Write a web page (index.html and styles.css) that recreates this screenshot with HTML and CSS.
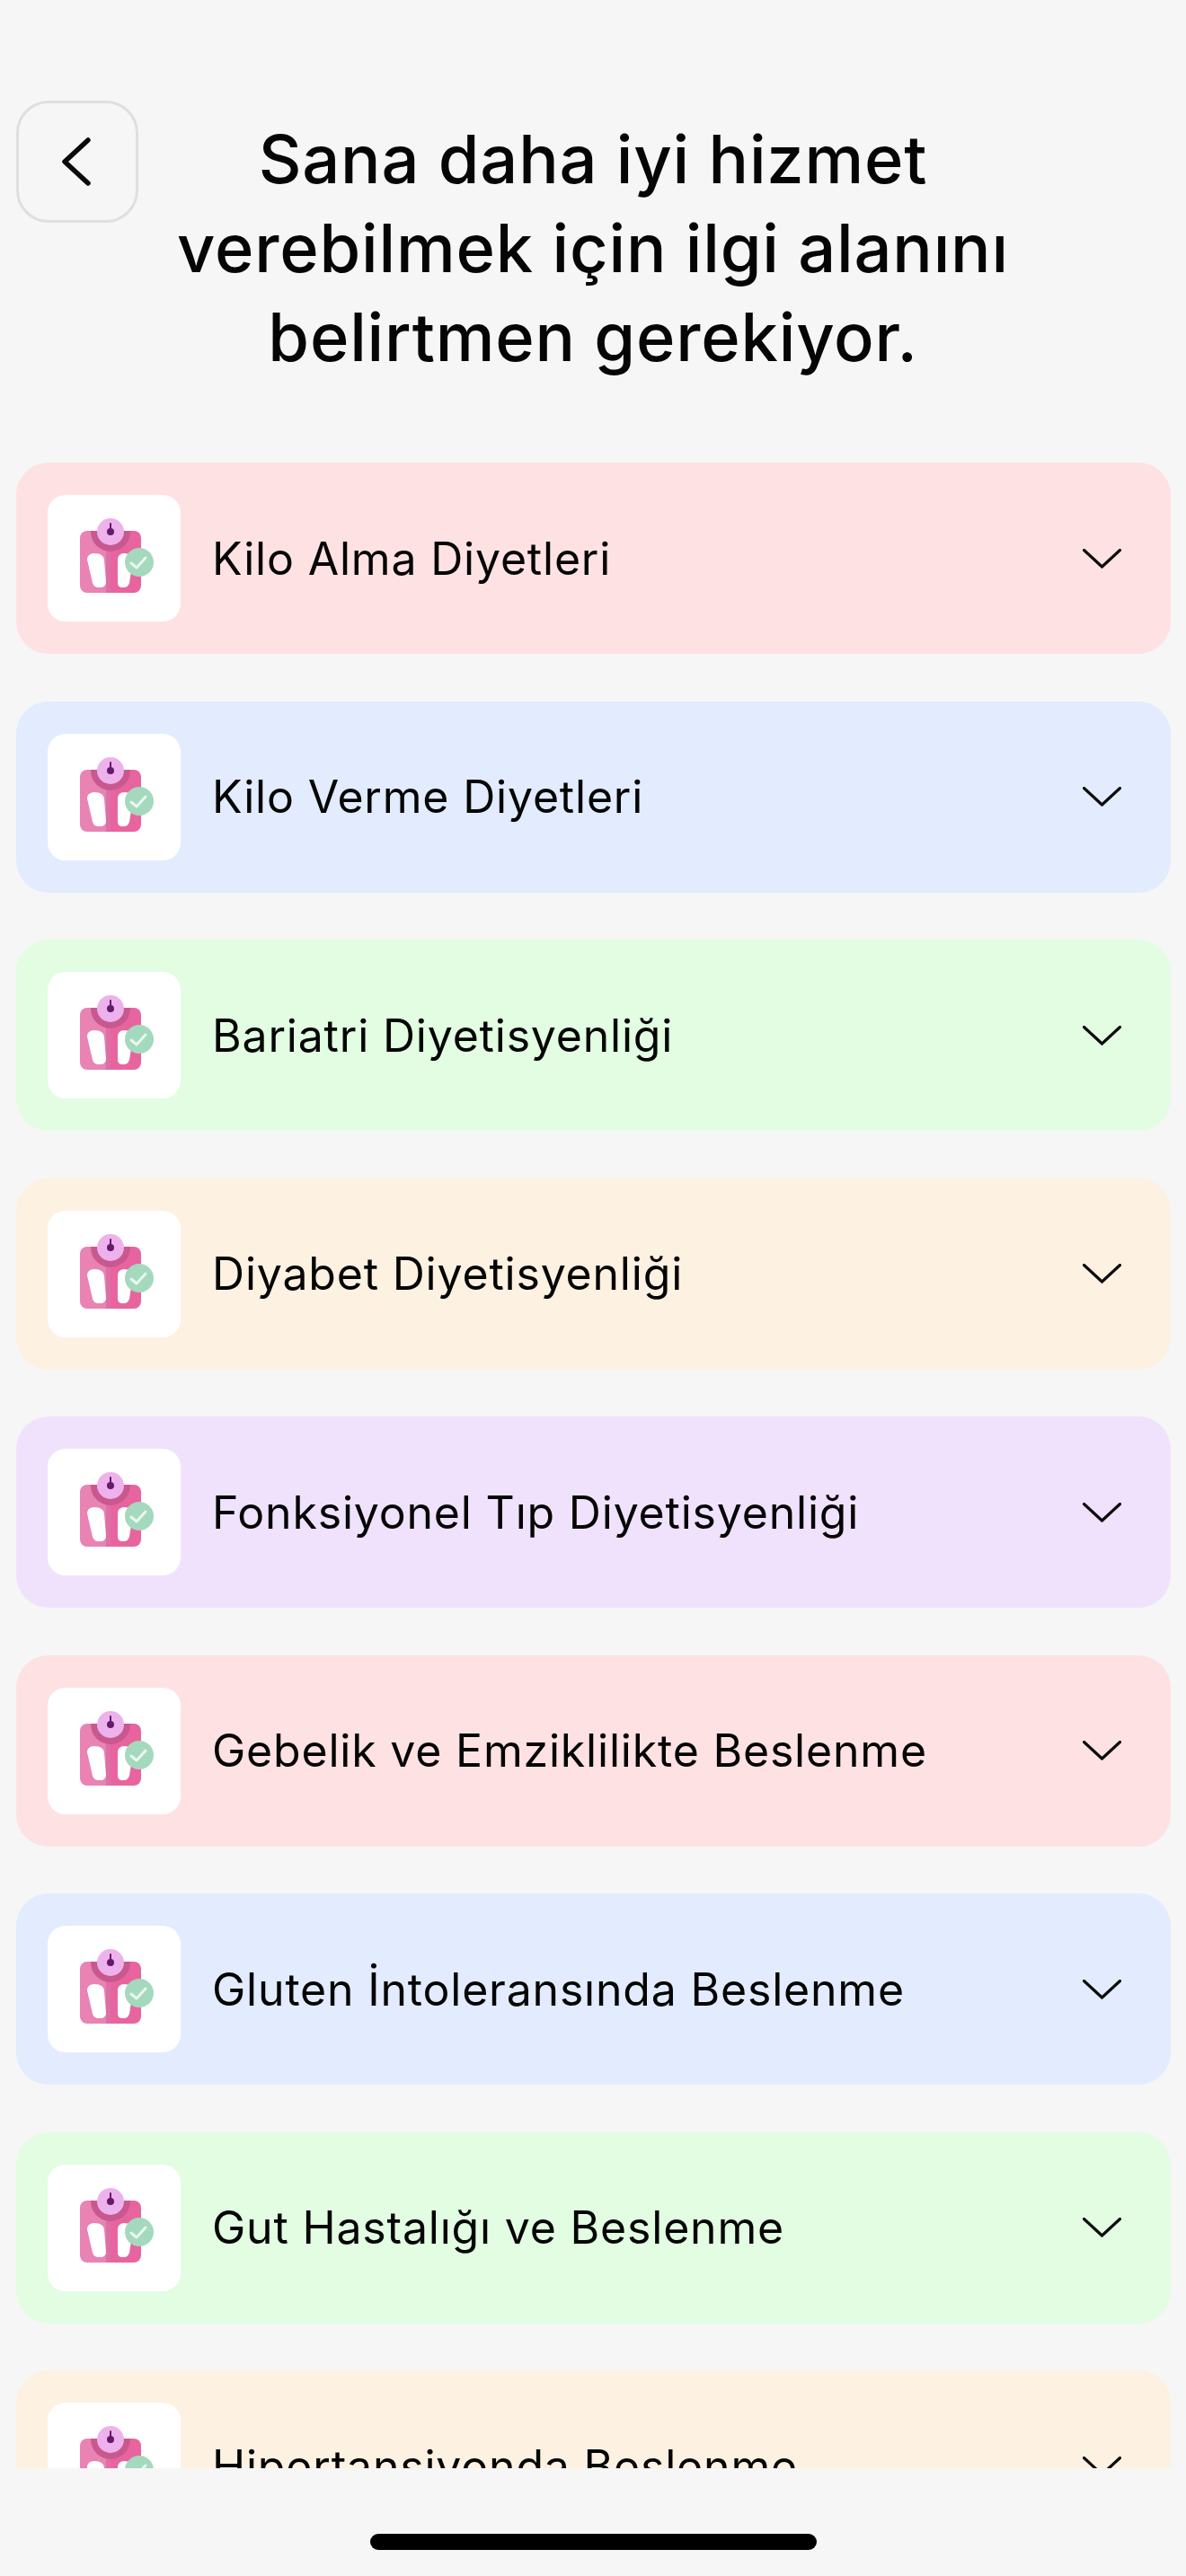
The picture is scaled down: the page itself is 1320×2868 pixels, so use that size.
FILE: index.html
```html
<!DOCTYPE html>
<html lang="tr">
<head>
<meta charset="utf-8">
<title>İlgi alanı</title>
<link rel="stylesheet" href="styles.css">
</head>
<body>
<svg class="defs" width="0" height="0" aria-hidden="true">
  <symbol id="scale" viewBox="0 0 148 141">
    <clipPath id="bodyclip"><rect x="36" y="40" width="68" height="69" rx="8"/></clipPath>
    <g clip-path="url(#bodyclip)">
      <rect x="36" y="40" width="34" height="69" fill="#e883b4"/>
      <rect x="70" y="40" width="34" height="69" fill="#e8649f"/>
      <rect x="65" y="60" width="5" height="49" fill="#dc6fa5"/>
      <circle cx="70" cy="41" r="22" fill="#c9588f"/>
    </g>
    <circle cx="70" cy="41" r="15" fill="#edb2ec"/>
    <path d="M70 32v6" stroke="#651a6b" stroke-width="2" stroke-linecap="round"/>
    <circle cx="70" cy="41" r="4" fill="#651a6b"/>
    <path d="M44 72c0-4 3-7 8-7 7 0 11 3 11 8l2 24c0 4-3 6-6 6h-2c-4 0-6-2-7-5z" fill="#fff"/>
    <path d="M78 72c0-4 3-7 7-7 6 0 10 3 10 8l-4 25c-1 3-3 5-6 5h-2c-3 0-5-2-5-5z" fill="#fff"/>
    <circle cx="102" cy="75" r="16" fill="#a4d9bd"/>
    <path d="M93 76l6 5 10-11" fill="none" stroke="#e9f7f0" stroke-width="3" stroke-linecap="round" stroke-linejoin="round"/>
  </symbol>
  <symbol id="chev" viewBox="0 0 43 22">
    <path d="M1.500 1.500L21.500 20L41.500 1.500" fill="none" stroke="#0c0c0c" stroke-width="3.200" stroke-linecap="round" stroke-linejoin="round"/>
  </symbol>
</svg>

<div class="screen">
  <header class="head">
    <button class="back" type="button" aria-label="Geri">
      <svg class="back-ico" viewBox="0 0 32 54"><path d="M29 3L3 27L29 51" fill="none" stroke="#0a0a0a" stroke-width="5.500" stroke-linecap="round" stroke-linejoin="round"/></svg>
    </button>
    <h1 class="title">Sana daha iyi hizmet<br>verebilmek için ilgi alanını<br>belirtmen gerekiyor.</h1>
  </header>

  <main class="list">
    <div class="card pink"><span class="tile"><svg class="scale"><use href="#scale"/></svg></span><span class="label">Kilo Alma Diyetleri</span><svg class="chev"><use href="#chev"/></svg></div>
    <div class="card blue"><span class="tile"><svg class="scale"><use href="#scale"/></svg></span><span class="label">Kilo Verme Diyetleri</span><svg class="chev"><use href="#chev"/></svg></div>
    <div class="card green"><span class="tile"><svg class="scale"><use href="#scale"/></svg></span><span class="label">Bariatri Diyetisyenliği</span><svg class="chev"><use href="#chev"/></svg></div>
    <div class="card peach"><span class="tile"><svg class="scale"><use href="#scale"/></svg></span><span class="label">Diyabet Diyetisyenliği</span><svg class="chev"><use href="#chev"/></svg></div>
    <div class="card purple"><span class="tile"><svg class="scale"><use href="#scale"/></svg></span><span class="label">Fonksiyonel Tıp Diyetisyenliği</span><svg class="chev"><use href="#chev"/></svg></div>
    <div class="card pink"><span class="tile"><svg class="scale"><use href="#scale"/></svg></span><span class="label">Gebelik ve Emziklilikte Beslenme</span><svg class="chev"><use href="#chev"/></svg></div>
    <div class="card blue"><span class="tile"><svg class="scale"><use href="#scale"/></svg></span><span class="label">Gluten İntoleransında Beslenme</span><svg class="chev"><use href="#chev"/></svg></div>
    <div class="card green"><span class="tile"><svg class="scale"><use href="#scale"/></svg></span><span class="label">Gut Hastalığı ve Beslenme</span><svg class="chev"><use href="#chev"/></svg></div>
    <div class="card peach"><span class="tile"><svg class="scale"><use href="#scale"/></svg></span><span class="label">Hipertansiyonda Beslenme</span><svg class="chev"><use href="#chev"/></svg></div>
  </main>

  <footer class="foot"><div class="home"></div></footer>
</div>
</body>
</html>
```

FILE: styles.css
```css
* { box-sizing: border-box; }
html, body { margin: 0; padding: 0; }
body {
  width: 1320px;
  height: 2868px;
  overflow: hidden;
  background: #f6f6f6;
  font-family: "Inter", "Noto Sans", sans-serif;
  color: #050505;
}
.defs { display: block; height: 0; }
.screen {
  display: flex;
  flex-direction: column;
  height: 2868px;
}
.head {
  display: grid;
  grid-template-columns: 136px 1fr 136px;
  padding: 112px 18px 0;
  height: 515px;
  flex: none;
}
.back {
  width: 136px;
  height: 136px;
  padding: 0;
  display: flex;
  align-items: center;
  justify-content: center;
  background: transparent;
  border: 3px solid #dfdfdf;
  border-radius: 36px;
}
.back-ico { width: 32px; height: 54px; margin-right: 2px; }
.title {
  grid-column: 2;
  margin: 16px 0 0;
  font-size: 74px;
  line-height: 99px;
  font-weight: 550;
  letter-spacing: 0.800px;
  text-align: center;
  white-space: nowrap;
}
.list {
  flex: none;
  height: 2233px;
  overflow: hidden;
  display: flex;
  flex-direction: column;
  gap: 52.5px;
  padding: 0 17px 0 18px;
}
.card {
  flex: none;
  height: 213px;
  display: flex;
  align-items: center;
  padding: 0 55px 0 35px;
  border-radius: 36px;
}
.pink { background: #fee2e3; }
.blue { background: #e2ecfe; }
.green { background: #e2fde2; }
.peach { background: #fdf1e2; }
.purple { background: #f0e2fd; }
.tile {
  flex: none;
  width: 148px;
  height: 141px;
  background: #fff;
  border-radius: 20px;
  display: block;
}
.scale { display: block; width: 148px; height: 141px; }
.label {
  flex: 1;
  margin-left: 35px;
  font-size: 50px;
  line-height: 70px;
  font-weight: 400;
  letter-spacing: 0.800px;
  white-space: nowrap;
}
.chev { flex: none; width: 43px; height: 22px; }
.foot {
  flex: 1;
  display: flex;
  justify-content: center;
  padding-top: 73px;
}
.home {
  width: 497px;
  height: 18px;
  border-radius: 9px;
  background: #000;
}
```
